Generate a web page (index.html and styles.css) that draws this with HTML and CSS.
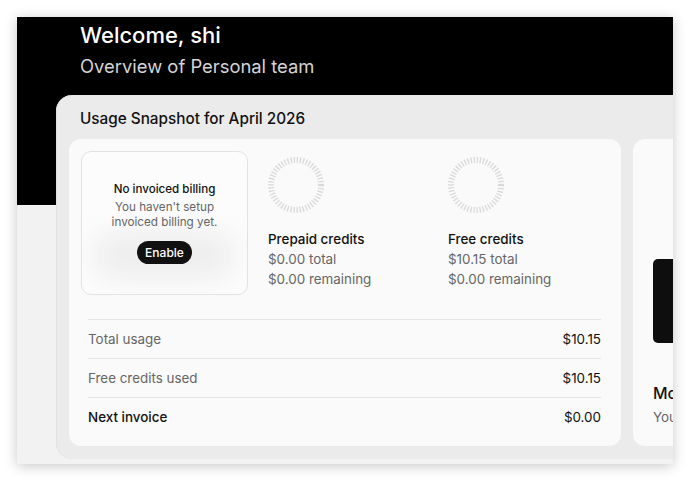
FILE: index.html
```html
<!DOCTYPE html>
<html>
<head>
<meta charset="utf-8">
<link rel="stylesheet" href="styles.css">
</head>
<body>
<div class="window">
  <header class="hero">
    <h1 class="hero-title">Welcome, shi</h1>
    <p class="hero-sub">Overview of Personal team</p>
  </header>
  <section class="panel">
    <h2 class="panel-title">Usage Snapshot for April 2026</h2>
    <div class="cards">
      <div class="card card-main">
        <div class="top">
          <div class="billing">
            <div class="billing-blur"></div>
            <div class="billing-title">No invoiced billing</div>
            <div class="billing-text">You haven't setup<br>invoiced billing yet.</div>
            <button class="enable">Enable</button>
          </div>
          <div class="credit">
            <svg class="ring" width="56" height="56" viewBox="0 0 56 56"><circle cx="28" cy="28" r="25" fill="none" stroke="#d9d9d9" stroke-width="6" stroke-dasharray="1.3 1.8"/></svg>
            <div class="credit-name">Prepaid credits</div>
            <div class="credit-val">$0.00 total</div>
            <div class="credit-val">$0.00 remaining</div>
          </div>
          <div class="credit">
            <svg class="ring" width="56" height="56" viewBox="0 0 56 56"><circle cx="28" cy="28" r="25" fill="none" stroke="#d9d9d9" stroke-width="6" stroke-dasharray="1.3 1.8"/></svg>
            <div class="credit-name">Free credits</div>
            <div class="credit-val">$10.15 total</div>
            <div class="credit-val">$0.00 remaining</div>
          </div>
        </div>
        <div class="rows">
          <div class="row"><span class="row-label">Total usage</span><span class="row-val">$10.15</span></div>
          <div class="row"><span class="row-label">Free credits used</span><span class="row-val">$10.15</span></div>
          <div class="row row-strong"><span class="row-label">Next invoice</span><span class="row-val">$0.00</span></div>
        </div>
      </div>
      <div class="card card-side">
        <div class="side-block"></div>
        <div class="side-title">Monthly</div>
        <div class="side-text">You</div>
      </div>
    </div>
  </section>
</div>
</body>
</html>
```
FILE: styles.css
```css
html, body {
  margin: 0;
  padding: 0;
  background: #ffffff;
  font-family: Inter, "Noto Sans", sans-serif;
}
.window {
  margin: 17px;
  width: 656px;
  height: 447px;
  overflow: hidden;
  background: #f2f2f2;
  box-shadow: 0 2px 12px rgba(0, 0, 0, 0.22);
}
.hero {
  background: #000;
  height: 188px;
  padding: 4px 0 0 63px;
  box-sizing: border-box;
}
.hero-title {
  margin: 0;
  font-size: 22px;
  line-height: 28px;
  font-weight: 500;
  color: #fff;
}
.hero-sub {
  margin: 4px 0 0;
  font-size: 18.4px;
  line-height: 26px;
  color: #d4d4d4;
  font-weight: 400;
}
.panel {
  margin: -110px 0 0 39px;
  width: 720px;
  background: #ebebeb;
  border-radius: 16px 0 0 16px;
  padding: 12px 12px 13px 13px;
  box-sizing: border-box;
  box-shadow: inset 1px 0 0 #e2e2e2;
}
.panel-title {
  margin: 0 0 8px 11px;
  font-size: 15.3px;
  line-height: 24px;
  font-weight: 500;
  color: #111;
}
.cards {
  display: flex;
  gap: 12px;
}
.card {
  background: #fafafa;
  border-radius: 12px;
  height: 307px;
  box-sizing: border-box;
  flex-shrink: 0;
}
.card-main {
  width: 552px;
  padding: 12px 12px 8px;
}
.top {
  display: flex;
}
.billing {
  position: relative;
  width: 167px;
  height: 144px;
  box-sizing: border-box;
  border: 1px solid #e2e2e2;
  border-radius: 10px;
  background: #fcfcfc;
  display: flex;
  flex-direction: column;
  align-items: center;
  padding-top: 29px;
  overflow: hidden;
}
.billing-blur {
  position: absolute;
  left: 12px;
  top: 80px;
  width: 140px;
  height: 46px;
  background: #dcdcdc;
  border-radius: 23px;
  filter: blur(14px);
  opacity: 0.45;
}
.billing-title {
  position: relative;
  font-size: 11.6px;
  line-height: 16px;
  font-weight: 500;
  color: #111;
}
.billing-text {
  position: relative;
  margin-top: 3px;
  font-size: 11.7px;
  line-height: 15px;
  color: #666;
  text-align: center;
}
.enable {
  position: relative;
  margin-top: 11px;
  width: 55px;
  height: 23px;
  border: none;
  border-radius: 12px;
  background: #111;
  color: #fff;
  font-family: inherit;
  font-size: 12px;
  font-weight: 500;
  padding: 0;
}
.credit {
  margin-left: 20px;
  width: 160px;
  padding-top: 6px;
}
.ring {
  display: block;
}
.credit-name {
  margin-top: 16px;
  font-size: 13.4px;
  line-height: 20px;
  font-weight: 500;
  color: #111;
}
.credit-val {
  font-size: 13.4px;
  line-height: 20px;
  color: #666;
}
.rows {
  margin: 24px 8px 0 7px;
}
.row {
  display: flex;
  justify-content: space-between;
  align-items: center;
  height: 38px;
  border-top: 1px solid #e4e4e4;
  font-size: 13.4px;
}
.row-label {
  color: #666;
}
.row-val {
  color: #111;
}
.row-strong .row-label {
  color: #111;
  font-weight: 500;
}
.card-side {
  width: 300px;
  padding: 120px 20px 0;
}
.side-block {
  height: 84px;
  background: #0e0e0e;
  border-radius: 5px;
}
.side-title {
  margin-top: 40px;
  font-size: 16px;
  line-height: 20px;
  font-weight: 500;
  color: #111;
}
.side-text {
  margin-top: 4px;
  font-size: 13.4px;
  line-height: 20px;
  color: #666;
}
```
